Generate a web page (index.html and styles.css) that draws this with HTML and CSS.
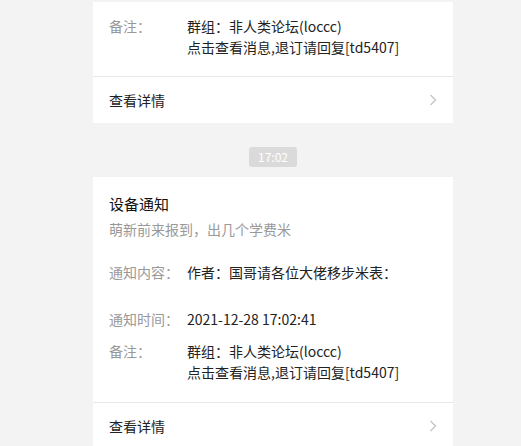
FILE: index.html
```html
<!DOCTYPE html>
<html lang="zh-CN">
<head>
<meta charset="utf-8">
<link rel="stylesheet" href="styles.css">
</head>
<body>
<div class="page">
  <div class="card card-first">
    <div class="details details-first">
      <div class="row">
        <div class="label">备注：</div>
        <div class="value">群组：非人类论坛(loccc)<br>点击查看消息,退订请回复[td5407]</div>
      </div>
    </div>
    <div class="footer">
      <span>查看详情</span>
      <svg class="chev" width="8" height="12" viewBox="0 0 8 12"><polyline points="1.5,1 6.5,6 1.5,11" fill="none" stroke="#c4c4c4" stroke-width="1.3"/></svg>
    </div>
  </div>

  <div class="time-wrap"><span class="time">17:02</span></div>

  <div class="card">
    <div class="head">
      <div class="title">设备通知</div>
      <div class="subtitle">萌新前来报到，出几个学费米</div>
    </div>
    <div class="details">
      <div class="row row-content">
        <div class="label">通知内容：</div>
        <div class="value">作者：国哥请各位大佬移步米表：</div>
      </div>
      <div class="row row-time">
        <div class="label">通知时间：</div>
        <div class="value">2021-12-28 17:02:41</div>
      </div>
      <div class="row">
        <div class="label">备注：</div>
        <div class="value">群组：非人类论坛(loccc)<br>点击查看消息,退订请回复[td5407]</div>
      </div>
    </div>
    <div class="footer">
      <span>查看详情</span>
      <svg class="chev" width="8" height="12" viewBox="0 0 8 12"><polyline points="1.5,1 6.5,6 1.5,11" fill="none" stroke="#c4c4c4" stroke-width="1.3"/></svg>
    </div>
  </div>
</div>
</body>
</html>
```

FILE: styles.css
```css
html, body {
  margin: 0;
  padding: 0;
  background: #f3f3f3;
  font-family: "Noto Sans CJK SC", "Noto Sans", sans-serif;
  overflow: hidden;
}
.page {
  padding-top: 2px;
  padding-left: 93px;
}
.card {
  width: 360px;
  background: #fff;
}
.details {
  padding: 22px 16px 19px;
}
.details-first {
  padding-top: 14px;
  padding-bottom: 18px;
}
.row {
  display: flex;
  font-size: 14px;
  line-height: 21px;
  margin-top: 11px;
}
.row:first-child {
  margin-top: 0;
}
.row-time {
  margin-top: 26px;
}
.label {
  width: 78px;
  flex-shrink: 0;
  color: #999;
}
.value {
  color: #222;
}
.footer {
  border-top: 1px solid #e8e8e8;
  height: 46px;
  padding: 0 16px;
  display: flex;
  align-items: center;
  justify-content: space-between;
  font-size: 14px;
  color: #222;
}
.time-wrap {
  width: 360px;
  display: flex;
  justify-content: center;
  padding: 24px 0 10px;
}
.time {
  display: block;
  background: #dadada;
  color: #fff;
  font-size: 12px;
  line-height: 20px;
  height: 20px;
  padding: 0 9px;
  border-radius: 3px;
}
.head {
  padding: 16px 16px 0;
}
.title {
  font-size: 15px;
  line-height: 22px;
  color: #111;
}
.subtitle {
  margin-top: 4px;
  font-size: 14px;
  line-height: 21px;
  color: #999;
}
```
